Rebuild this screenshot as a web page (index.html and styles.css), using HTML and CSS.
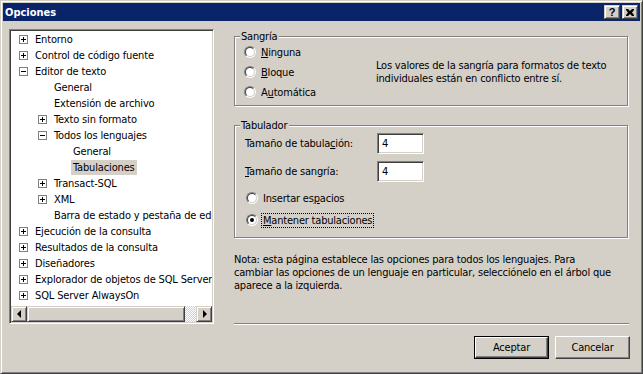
FILE: index.html
```html
<!DOCTYPE html>
<html lang="es">
<head>
<meta charset="utf-8">
<title>Opciones</title>
<link rel="stylesheet" href="styles.css">
</head>
<body>
<div class="window">
  <div class="titlebar">
    <span class="title">Opciones</span>
    <div class="caption-buttons">
      <span class="cbtn help">?</span>
      <span class="cbtn"><svg width="8" height="7" viewBox="0 0 8 7"><path d="M0 0h2l2 2 2-2h2v1L6 3.5 8 6v1H6L4 5 2 7H0V6l2-2.5L0 1z" fill="#000"/></svg></span>
    </div>
  </div>
  <div class="client">
    <div class="tree">
      <div class="tree-items">
        <div class="row l0"><span class="exp"><svg width="9" height="9"><rect x="0.5" y="0.5" width="8" height="8" fill="#fff" stroke="#808080"/><path d="M2 4.5h5M4.5 2v5" stroke="#000"/></svg></span><span class="lbl">Entorno</span></div>
        <div class="row l0"><span class="exp"><svg width="9" height="9"><rect x="0.5" y="0.5" width="8" height="8" fill="#fff" stroke="#808080"/><path d="M2 4.5h5M4.5 2v5" stroke="#000"/></svg></span><span class="lbl">Control de código fuente</span></div>
        <div class="row l0"><span class="exp"><svg width="9" height="9"><rect x="0.5" y="0.5" width="8" height="8" fill="#fff" stroke="#808080"/><path d="M2 4.5h5" stroke="#000"/></svg></span><span class="lbl">Editor de texto</span></div>
        <div class="row l1"><span class="exp"></span><span class="lbl">General</span></div>
        <div class="row l1"><span class="exp"></span><span class="lbl">Extensión de archivo</span></div>
        <div class="row l1"><span class="exp"><svg width="9" height="9"><rect x="0.5" y="0.5" width="8" height="8" fill="#fff" stroke="#808080"/><path d="M2 4.5h5M4.5 2v5" stroke="#000"/></svg></span><span class="lbl">Texto sin formato</span></div>
        <div class="row l1"><span class="exp"><svg width="9" height="9"><rect x="0.5" y="0.5" width="8" height="8" fill="#fff" stroke="#808080"/><path d="M2 4.5h5" stroke="#000"/></svg></span><span class="lbl">Todos los lenguajes</span></div>
        <div class="row l2"><span class="exp"></span><span class="lbl">General</span></div>
        <div class="row l2"><span class="exp"></span><span class="lbl selected">Tabulaciones</span></div>
        <div class="row l1"><span class="exp"><svg width="9" height="9"><rect x="0.5" y="0.5" width="8" height="8" fill="#fff" stroke="#808080"/><path d="M2 4.5h5M4.5 2v5" stroke="#000"/></svg></span><span class="lbl">Transact-SQL</span></div>
        <div class="row l1"><span class="exp"><svg width="9" height="9"><rect x="0.5" y="0.5" width="8" height="8" fill="#fff" stroke="#808080"/><path d="M2 4.5h5M4.5 2v5" stroke="#000"/></svg></span><span class="lbl">XML</span></div>
        <div class="row l1"><span class="exp"></span><span class="lbl">Barra de estado y pestaña de edición</span></div>
        <div class="row l0"><span class="exp"><svg width="9" height="9"><rect x="0.5" y="0.5" width="8" height="8" fill="#fff" stroke="#808080"/><path d="M2 4.5h5M4.5 2v5" stroke="#000"/></svg></span><span class="lbl">Ejecución de la consulta</span></div>
        <div class="row l0"><span class="exp"><svg width="9" height="9"><rect x="0.5" y="0.5" width="8" height="8" fill="#fff" stroke="#808080"/><path d="M2 4.5h5M4.5 2v5" stroke="#000"/></svg></span><span class="lbl">Resultados de la consulta</span></div>
        <div class="row l0"><span class="exp"><svg width="9" height="9"><rect x="0.5" y="0.5" width="8" height="8" fill="#fff" stroke="#808080"/><path d="M2 4.5h5M4.5 2v5" stroke="#000"/></svg></span><span class="lbl">Diseñadores</span></div>
        <div class="row l0"><span class="exp"><svg width="9" height="9"><rect x="0.5" y="0.5" width="8" height="8" fill="#fff" stroke="#808080"/><path d="M2 4.5h5M4.5 2v5" stroke="#000"/></svg></span><span class="lbl">Explorador de objetos de SQL Server</span></div>
        <div class="row l0"><span class="exp"><svg width="9" height="9"><rect x="0.5" y="0.5" width="8" height="8" fill="#fff" stroke="#808080"/><path d="M2 4.5h5M4.5 2v5" stroke="#000"/></svg></span><span class="lbl">SQL Server AlwaysOn</span></div>
      </div>
      <div class="hscroll">
        <span class="sb-btn"><span class="tri-left"></span></span>
        <span class="sb-thumb"></span>
        <span class="sb-track"></span>
        <span class="sb-btn"><span class="tri-right"></span></span>
      </div>
    </div>
    <div class="panel">
      <div class="group g1">
        <div class="legend">Sangría</div>
        <div class="g1-body">
          <div class="radios">
            <div class="radio-row"><span class="radio"><span class="radio-in"></span></span><span class="rlabel"><u>N</u>inguna</span></div>
            <div class="radio-row"><span class="radio"><span class="radio-in"></span></span><span class="rlabel"><u>B</u>loque</span></div>
            <div class="radio-row"><span class="radio"><span class="radio-in"></span></span><span class="rlabel">A<u>u</u>tomática</span></div>
          </div>
          <div class="conflict">Los valores de la sangría para formatos de texto<br>individuales están en conflicto entre sí.</div>
        </div>
      </div>
      <div class="group g2">
        <div class="legend">Tabulador</div>
        <div class="field-row first"><span class="flabel">Tamaño de tabula<u>c</u>ión:</span><span class="field">4</span></div>
        <div class="field-row"><span class="flabel"><u>T</u>amaño de sangría:</span><span class="field">4</span></div>
        <div class="radio-row tall first"><span class="radio"><span class="radio-in"></span></span><span class="rlabel2">Insertar es<u>p</u>acios</span></div>
        <div class="radio-row tall"><span class="radio"><span class="radio-in"><span class="dot"></span></span></span><span class="rlabel2 focus"><u>M</u>antener tabulaciones</span></div>
      </div>
      <p class="note">Nota: esta página establece las opciones para todos los lenguajes. Para<br>cambiar las opciones de un lenguaje en particular, selecciónelo en el árbol que<br>aparece a la izquierda.</p>
      <div class="separator"></div>
      <div class="buttons">
        <span class="btn default"><span class="btn-face">Aceptar</span></span>
        <span class="btn"><span class="btn-face">Cancelar</span></span>
      </div>
    </div>
  </div>
</div>
</body>
</html>
```
FILE: styles.css
```css
* { box-sizing: border-box; }
html, body { margin: 0; padding: 0; }
body {
  width: 643px;
  height: 374px;
  overflow: hidden;
  background: #D4D0C8;
  font-family: "DejaVu Sans Condensed", "Liberation Sans", Arial, sans-serif;
  font-size: 11px;
  line-height: 13px;
  color: #000;
}
.window {
  width: 643px;
  height: 374px;
  border: 1px solid;
  border-color: #D4D0C8 #404040 #404040 #D4D0C8;
  box-shadow: inset 1px 1px #fff, inset -1px -1px #808080;
  padding: 2px;
  display: flex;
  flex-direction: column;
  background: #D4D0C8;
}
.titlebar {
  height: 18px;
  flex: none;
  background: #0A246A;
  display: flex;
  align-items: center;
  justify-content: space-between;
  padding: 0 2px;
}
.title { color: #fff; font-weight: bold; }
.caption-buttons { display: flex; gap: 2px; }
.cbtn {
  width: 16px;
  height: 14px;
  background: #D4D0C8;
  border: 1px solid;
  border-color: #D4D0C8 #404040 #404040 #D4D0C8;
  box-shadow: inset 1px 1px #fff, inset -1px -1px #808080;
  display: flex;
  align-items: center;
  justify-content: center;
  font-family: "Liberation Sans", Arial, sans-serif;
  font-weight: bold;
  font-size: 11px;
  line-height: 11px;
}
.cbtn.help { padding-top: 1px; }
.client {
  flex: 1;
  display: flex;
  gap: 20px;
  padding: 8px 0 0 6px;
  align-items: flex-start;
}
/* tree */
.tree {
  width: 205px;
  height: 295px;
  flex: none;
  background: #fff;
  border: 1px solid;
  border-color: #808080 #fff #fff #808080;
  box-shadow: inset 1px 1px #404040, inset -1px -1px #D4D0C8;
  padding: 1px;
  display: flex;
  flex-direction: column;
}
.tree-items { flex: 1; overflow: hidden; letter-spacing: -0.15px; }
.row {
  height: 16px;
  display: flex;
  align-items: center;
  white-space: nowrap;
}
.row.l0 { padding-left: 8px; }
.row.l1 { padding-left: 27px; }
.row.l2 { padding-left: 46px; }
.exp { width: 9px; height: 9px; flex: none; margin-right: 5px; display: flex; }
.lbl { padding: 1px 2px; }
.lbl.selected { background: #D4D0C8; }
.hscroll { height: 16px; flex: none; display: flex; }
.sb-btn, .sb-thumb {
  height: 16px;
  background: #D4D0C8;
  border: 1px solid;
  border-color: #D4D0C8 #404040 #404040 #D4D0C8;
  box-shadow: inset 1px 1px #fff, inset -1px -1px #808080;
}
.sb-btn { width: 16px; flex: none; display: flex; align-items: center; justify-content: center; }
.sb-thumb { width: 158px; flex: none; }
.sb-track {
  flex: 1;
  background-image: repeating-conic-gradient(#fff 0 25%, #D4D0C8 0 50%);
  background-size: 2px 2px;
}
.tri-left { width: 0; height: 0; border-style: solid; border-width: 4px 4px 4px 0; border-color: transparent #000 transparent transparent; margin-right: 1px; }
.tri-right { width: 0; height: 0; border-style: solid; border-width: 4px 0 4px 4px; border-color: transparent transparent transparent #000; margin-left: 1px; }
/* panel */
.panel { width: 396px; flex: none; display: flex; flex-direction: column; letter-spacing: -0.2px; }
.group {
  width: 394px;
  border: 1px solid #808080;
  box-shadow: 1px 1px 0 #fff, inset 1px 1px 0 #fff;
}
.legend {
  width: fit-content;
  background: #D4D0C8;
  margin-top: -7px;
  padding: 0 2px 0 1px;
}
.g1 { margin-top: 7px; padding: 0 0 3px 9px; }
.g1 .legend { margin-left: -4px; }
.g1-body { display: flex; margin-top: -1px; }
.radios { width: 132px; flex: none; }
.radio-row { height: 20px; display: flex; align-items: center; }
.radio-row.tall { height: 22px; }
.radio {
  width: 12px;
  height: 12px;
  flex: none;
  border-radius: 50%;
  border: 1px solid;
  border-color: #808080 #fff #fff #808080;
}
.radio-in {
  display: flex;
  align-items: center;
  justify-content: center;
  width: 10px;
  height: 10px;
  border-radius: 50%;
  border: 1px solid;
  border-color: #404040 #D4D0C8 #D4D0C8 #404040;
  background: #fff;
}
.dot { width: 4px; height: 4px; border-radius: 50%; background: #000; }
.rlabel { margin-left: 5px; }
.conflict { align-self: center; margin-top: -1px; }
.g2 { margin-top: 19px; padding: 0 0 6px 11px; }
.g2 .legend { margin-left: -6px; }
.field-row { display: flex; align-items: center; height: 21px; margin-top: 7px; margin-left: -1px; }
.field-row.first { margin-top: 1px; }
.flabel { width: 132px; flex: none; }
.field {
  width: 47px;
  height: 21px;
  background: #fff;
  border: 1px solid;
  border-color: #808080 #fff #fff #808080;
  box-shadow: inset 1px 1px #404040, inset -1px -1px #D4D0C8;
  padding: 3px 0 0 4px;
}
.radio-row.first { margin-top: 5px; }
.rlabel2 { margin-left: 3px; padding: 1px 2px; }
.rlabel2.focus { outline: 1px dotted #000; outline-offset: -1px; }
.note { margin: 15px 0 0 0; white-space: nowrap; }
.separator {
  width: 395px;
  height: 2px;
  margin-top: 31px;
  border-top: 1px solid #808080;
  border-bottom: 1px solid #fff;
}
.buttons { display: flex; justify-content: flex-end; gap: 6px; margin-top: 11px; }
.btn {
  width: 75px;
  height: 23px;
  display: flex;
  border: 1px solid;
  border-color: #fff #404040 #404040 #fff;
  box-shadow: inset -1px -1px #808080;
}
.btn-face { flex: 1; display: flex; align-items: center; justify-content: center; }
.btn.default { border: 1px solid #000; box-shadow: none; }
.btn.default .btn-face {
  border: 1px solid;
  border-color: #fff #404040 #404040 #fff;
  box-shadow: inset -1px -1px #808080;
}
```
